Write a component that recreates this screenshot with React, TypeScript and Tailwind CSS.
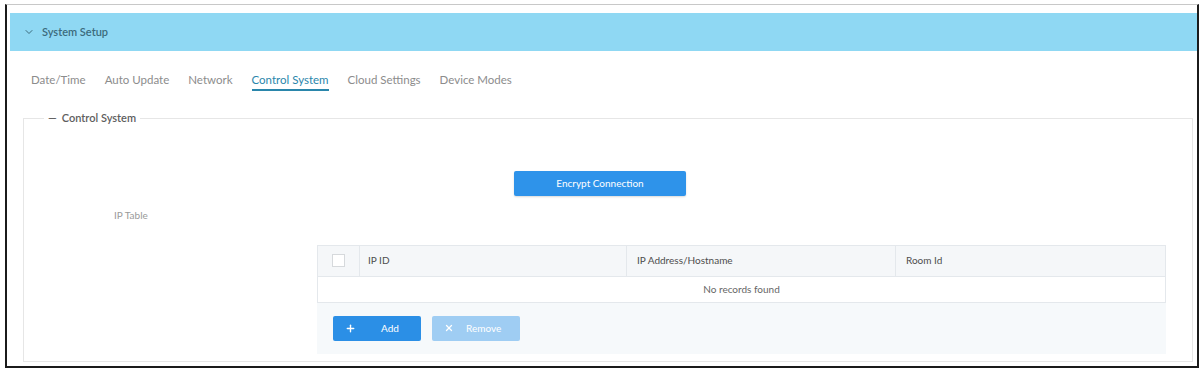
import { ChevronDown, Plus, X } from 'lucide-react';

const tabs = ['Date/Time', 'Auto Update', 'Network', 'Control System', 'Cloud Settings', 'Device Modes'];

export default function App() {
    return (
        <div className="w-[1201px] h-[370px] bg-white overflow-hidden pt-[4px] pl-[5px]" style={{ fontFamily: 'Lato, "Open Sans", sans-serif' }}>
            {/* Frame */}
            <div className="w-[1194px] h-[364px] border-t border-t-[#c8c8c8] border-x-2 border-b-2 border-[#1b1b1b] pl-[3px] pt-[8px]">
                {/* Section header */}
                <div className="h-[38px] bg-[#8fd8f3] flex items-center pl-[13px] gap-[7px] text-[#3c6b7c]">
                    <ChevronDown size={12} strokeWidth={2} />
                    <span className="text-[11px] font-semibold">System Setup</span>
                </div>

                {/* Tabs */}
                <div className="flex items-start h-[65px] pt-[20px] pl-[21px] text-[11.5px] text-[#8c8c8c]">
                    {tabs.map((t) => (
                        <div key={t} className="mr-[19px]">
                            <div className={t === 'Control System' ? 'text-[#2a86ab] border-b-2 border-[#2a86ab] pb-[1px]' : 'pb-[3px]'}>
                                {t}
                            </div>
                        </div>
                    ))}
                </div>

                {/* Fieldset */}
                <fieldset className="ml-[13px] mr-[4px] h-[252px] border border-[#e6e6e6] px-0 pt-0 mt-[-6px]">
                    <legend className="ml-[20px] px-[4px] text-[11px] font-semibold text-[#5e5e5e]">
                        <span className="mr-[5px]">—</span>Control System
                    </legend>

                    <div className="flex justify-center pt-[44px] pr-[16px]">
                        <button className="w-[172px] h-[25px] rounded-[2px] bg-[#2e93ea] text-white text-[10px] shadow-[0_1px_2px_rgba(0,0,0,0.15)]">
                            Encrypt Connection
                        </button>
                    </div>

                    <div className="pl-[90px] pt-[12px] text-[10px] text-[#9a9a9a]">IP Table</div>

                    {/* Table block */}
                    <div className="ml-[293px] mt-[22px] w-[849px]">
                        <div className="border border-[#e4e8ec]">
                            <div className="flex h-[30px] bg-[#f5f7f9] text-[10px] text-[#4d4d4d]">
                                <div className="w-[42px] flex items-center justify-center border-r border-[#e4e8ec]">
                                    <div className="w-[13px] h-[13px] border border-[#d6d9dc] bg-white" />
                                </div>
                                <div className="w-[267px] flex items-center pl-[8px] border-r border-[#e4e8ec]">IP ID</div>
                                <div className="w-[269px] flex items-center pl-[10px] border-r border-[#e4e8ec]">IP Address/Hostname</div>
                                <div className="flex-1 flex items-center pl-[10px]">Room Id</div>
                            </div>
                            <div className="h-[26px] flex items-center justify-center border-t border-[#e4e8ec] text-[10px] text-[#666]">
                                No records found
                            </div>
                        </div>
                        <div className="h-[51px] bg-[#f6f9fb] flex items-center gap-[11px] pl-[16px]">
                            <button className="w-[88px] h-[25px] rounded-[2px] bg-[#2b8fe6] text-white text-[10px] flex items-center pl-[12px] gap-[25px]">
                                <Plus size={11} strokeWidth={3} />
                                <span>Add</span>
                            </button>
                            <button className="w-[88px] h-[25px] rounded-[2px] bg-[#9fcdf3] text-white text-[10px] flex items-center pl-[12px] gap-[12px]">
                                <X size={10} strokeWidth={3} />
                                <span>Remove</span>
                            </button>
                        </div>
                    </div>
                </fieldset>
            </div>
        </div>
    );
}
